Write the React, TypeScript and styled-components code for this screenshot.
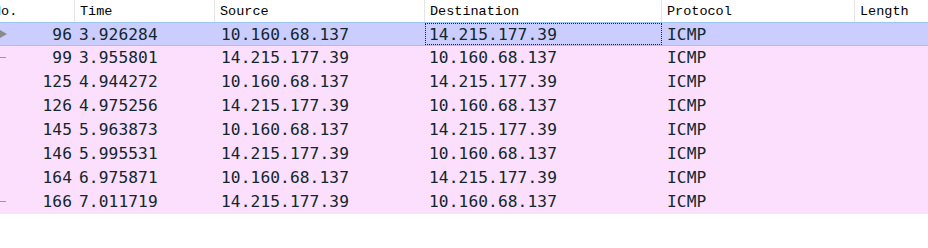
import React from 'react';
import styled, { createGlobalStyle } from 'styled-components';

const GlobalStyle = createGlobalStyle({
  'html, body': {
    margin: 0,
    padding: 0,
    background: '#ffffff',
  },
});

const Viewport = styled.div({
  width: '928px',
  height: '248px',
  overflow: 'hidden',
  background: '#ffffff',
});

const Table = styled.div({
  marginLeft: '-8px',
  width: '936px',
});

const HeaderRow = styled.div({
  display: 'flex',
  height: '22px',
  background: '#ffffff',
});

const HeaderCell = styled.div<{ $w?: number; $pad?: number }>(({ $w, $pad }) => ({
  flex: $w ? `0 0 ${$w}px` : '1 1 auto',
  boxSizing: 'border-box',
  paddingLeft: `${$pad ?? 5}px`,
  paddingTop: '1px',
  borderRight: '1px solid #e5e5e5',
  fontFamily: '"Liberation Mono", "DejaVu Sans Mono", monospace',
  fontSize: '13.5px',
  lineHeight: '21px',
  color: '#000000',
  whiteSpace: 'nowrap',
  overflow: 'hidden',
  '&:last-child': { borderRight: 'none' },
}));

const Row = styled.div<{ $selected?: boolean }>(({ $selected }) => ({
  display: 'flex',
  boxSizing: 'border-box',
  height: '24px',
  background: $selected ? '#cacdfe' : '#fbdffc',
  borderTop: $selected ? '1px solid #9cc6f5' : 'none',
  borderBottom: $selected ? '1px solid #9cc6f5' : 'none',
}));

const Cell = styled.div<{ $w?: number; $right?: boolean; $focus?: boolean; $pad?: number }>(
  ({ $w, $right, $focus, $pad }) => ({
    position: 'relative',
    flex: $w ? `0 0 ${$w}px` : '1 1 auto',
    boxSizing: 'border-box',
    paddingLeft: $right ? 0 : `${$pad ?? 6}px`,
    paddingRight: $right ? '3px' : 0,
    paddingTop: '1px',
    textAlign: $right ? 'right' : 'left',
    fontFamily: '"DejaVu Sans Mono", "Liberation Mono", monospace',
    fontSize: '16.2px',
    letterSpacing: '0.1px',
    lineHeight: '21px',
    color: '#12272e',
    whiteSpace: 'nowrap',
    overflow: 'hidden',
    outline: $focus ? '1px dotted #222222' : 'none',
    outlineOffset: '-1px',
  }),
);

const Marker = styled.span({
  position: 'absolute',
  left: '8px',
  top: '5px',
  width: '7px',
  height: '12px',
  display: 'flex',
  alignItems: 'center',
});

type Packet = {
  no: number;
  time: string;
  src: string;
  dst: string;
  mark?: 'arrow' | 'dash';
};

const packets: Packet[] = [
  { no: 96, time: '3.926284', src: '10.160.68.137', dst: '14.215.177.39', mark: 'arrow' },
  { no: 99, time: '3.955801', src: '14.215.177.39', dst: '10.160.68.137', mark: 'dash' },
  { no: 125, time: '4.944272', src: '10.160.68.137', dst: '14.215.177.39' },
  { no: 126, time: '4.975256', src: '14.215.177.39', dst: '10.160.68.137' },
  { no: 145, time: '5.963873', src: '10.160.68.137', dst: '14.215.177.39' },
  { no: 146, time: '5.995531', src: '14.215.177.39', dst: '10.160.68.137' },
  { no: 164, time: '6.975871', src: '10.160.68.137', dst: '14.215.177.39' },
  { no: 166, time: '7.011719', src: '14.215.177.39', dst: '10.160.68.137', mark: 'dash' },
];

const widths = [83, 140, 210, 237, 193];

const MarkIcon: React.FC<{ kind: 'arrow' | 'dash' }> = ({ kind }) => (
  <svg width="7" height="12" viewBox="0 0 7 12">
    {kind === 'arrow' ? (
      <path d="M0 2 L7 6 L0 10 Z" fill="#8a8a8a" />
    ) : (
      <path d="M0 6.5 H6" stroke="#9a9a9a" strokeWidth="1" />
    )}
  </svg>
);

const App: React.FC = () => {
  return (
    <Viewport>
      <GlobalStyle />
      <Table>
        <HeaderRow>
          <HeaderCell $w={widths[0]} $pad={1}>No.</HeaderCell>
          <HeaderCell $w={widths[1]}>Time</HeaderCell>
          <HeaderCell $w={widths[2]}>Source</HeaderCell>
          <HeaderCell $w={widths[3]}>Destination</HeaderCell>
          <HeaderCell $w={widths[4]}>Protocol</HeaderCell>
          <HeaderCell>Length</HeaderCell>
        </HeaderRow>
        {packets.map((p, i) => (
          <Row key={p.no} $selected={i === 0}>
            <Cell $w={widths[0]} $right>
              {p.mark && (
                <Marker>
                  <MarkIcon kind={p.mark} />
                </Marker>
              )}
              {p.no}
            </Cell>
            <Cell $w={widths[1]} $pad={4}>{p.time}</Cell>
            <Cell $w={widths[2]} $pad={6}>{p.src}</Cell>
            <Cell $w={widths[3]} $pad={4} $focus={i === 0}>{p.dst}</Cell>
            <Cell $w={widths[4]} $pad={5}>ICMP</Cell>
            <Cell />
          </Row>
        ))}
      </Table>
    </Viewport>
  );
};

export default App;
